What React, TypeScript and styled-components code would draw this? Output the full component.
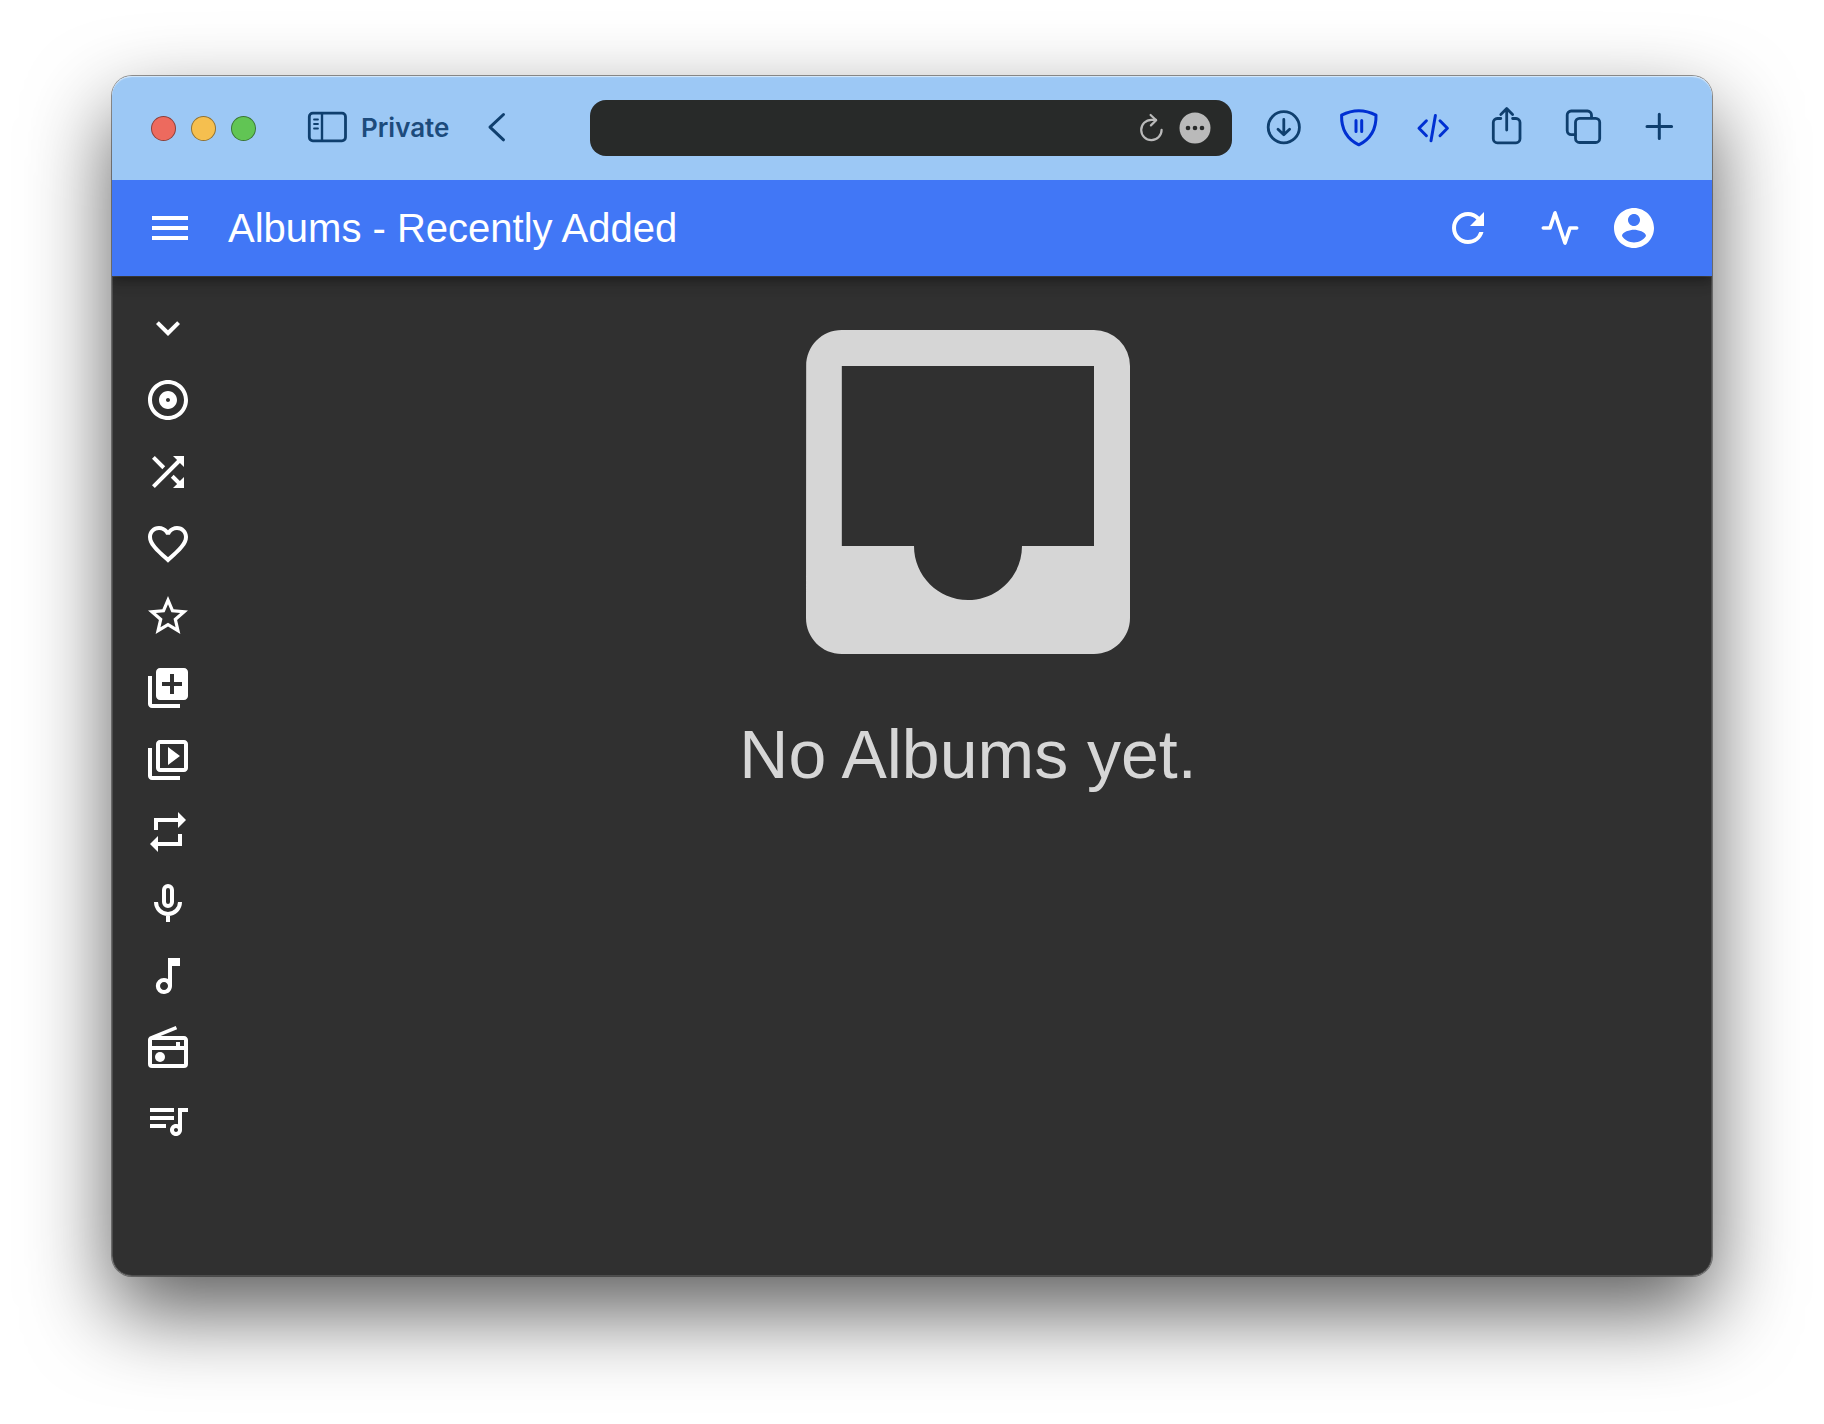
import React from 'react';
import styled, { createGlobalStyle } from 'styled-components';
import {
  MdExpandMore,
  MdFavoriteBorder,
  MdInbox,
  MdLibraryAdd,
  MdMenu,
  MdOutlineAlbum,
  MdOutlineMusicNote,
  MdOutlineRadio,
  MdOutlineVideoLibrary,
  MdRefresh,
  MdRepeat,
  MdShuffle,
  MdStarBorder,
} from 'react-icons/md';
import { FiActivity } from 'react-icons/fi';

const INK = '#0f3f6e';
const EXTENSION_BLUE = '#0030d2';

const GlobalStyle = createGlobalStyle`
  *, *::before, *::after { box-sizing: border-box; }
  body {
    margin: 0;
    background: #ffffff;
    font-family: Helvetica, "Liberation Sans", Arial, sans-serif;
  }
  button, input { font: inherit; }
`;

const Desktop = styled.div`
  display: flex;
  min-height: 100vh;
  padding: 76px 112px 148px;
`;

const Window = styled.div`
  flex: 1;
  min-width: 0;
  display: flex;
  flex-direction: column;
  border-radius: 20px;
  box-shadow:
    0 0 0 1px rgba(0, 0, 0, 0.4),
    0 36px 84px rgba(0, 0, 0, 0.64);
`;

const BrowserBar = styled.header`
  display: flex;
  align-items: center;
  height: 104px;
  padding: 0 33px 0 39px;
  background: #9cc8f5;
  border-radius: 20px 20px 0 0;
  box-shadow: inset 0 2px 1px -1px #d9eafb;
`;

const BareButton = styled.button`
  display: flex;
  align-items: center;
  justify-content: center;
  flex: none;
  padding: 0;
  border: 0;
  background: none;
  color: inherit;
  cursor: pointer;

  svg { display: block; overflow: visible; }
`;

const TrafficLights = styled.div`
  display: flex;
  gap: 15px;
`;

const Light = styled.button<{ $color: string }>`
  width: 25px;
  height: 25px;
  padding: 0;
  border: 1px solid rgba(0, 0, 0, 0.4);
  border-radius: 50%;
  background: ${(p) => p.$color};
`;

const SidebarButton = styled(BareButton)`
  gap: 14px;
  margin-left: 51px;
  color: ${INK};
`;

const PrivateLabel = styled.span`
  color: #1c4b7c;
  font-family: Inter, sans-serif;
  font-size: 26px;
  font-weight: 600;
  line-height: 32px;
`;

const BackButton = styled(BareButton)`
  width: 40px;
  height: 40px;
  margin-left: 28px;
  color: ${INK};
`;

const AddressBar = styled.div`
  display: flex;
  flex: 1;
  align-items: center;
  gap: 12px;
  min-width: 160px;
  height: 56px;
  margin: 0 32px 0 73px;
  padding: 0 21px;
  border-radius: 16px;
  background: #282a29;
  color: #bababa;
`;

const AddressInput = styled.input`
  flex: 1;
  min-width: 0;
  height: 40px;
  padding: 0;
  border: 0;
  outline: 0;
  background: transparent;
  color: inherit;
  font-size: 26px;
`;

const BrowserTools = styled.div`
  display: flex;
  gap: 35px;
`;

const ToolButton = styled(BareButton)<{ $color: string }>`
  width: 40px;
  height: 40px;
  color: ${(p) => p.$color};
`;

const AppBar = styled.div`
  position: relative;
  z-index: 1;
  display: flex;
  align-items: center;
  height: 96px;
  padding: 0 54px 0 34px;
  background: #4177f6;
  color: #ffffff;
  box-shadow:
    0 4px 8px -2px rgba(0, 0, 0, 0.2),
    0 8px 10px rgba(0, 0, 0, 0.14),
    0 2px 20px rgba(0, 0, 0, 0.12);
  clip-path: inset(0 0 -32px 0);
`;

const Title = styled.h1`
  flex: 1;
  margin: 0 34px;
  font-size: 40px;
  font-weight: 400;
  line-height: 64px;
`;

const BarButton = styled(BareButton)`
  width: 48px;
  height: 48px;
`;

const AppActions = styled.div`
  display: flex;
  gap: 26px;
`;

const RefreshButton = styled(BarButton)`
  margin-right: 44px;
`;

const Body = styled.div`
  display: flex;
  flex: 1;
  background: #303030;
  border-radius: 0 0 20px 20px;
  box-shadow: inset 0 0 0 1px rgba(255, 255, 255, 0.14);
`;

const Sidebar = styled.nav`
  flex: none;
  width: 112px;
  padding: 16px 0;
`;

const MenuList = styled.ul`
  margin: 0;
  padding: 0;
  list-style: none;
`;

const MenuButton = styled(BareButton)`
  width: 100%;
  height: 72px;
  color: #ffffff;
`;

const EmptyState = styled.main`
  display: flex;
  flex: 1;
  flex-direction: column;
  align-items: center;
  min-width: 0;
  color: #d6d6d6;

  svg { display: block; }
`;

const EmptyText = styled.p`
  margin: 0;
  font-size: 68px;
  line-height: 92px;
`;

type StrokeProps = {
  width?: number;
  size?: number;
  children: React.ReactNode;
};

function Stroke({ width = 3, size = 40, children }: StrokeProps) {
  return (
    <svg
      width={size}
      height={size}
      viewBox={`0 0 ${size} ${size}`}
      fill="none"
      stroke="currentColor"
      strokeWidth={width}
      strokeLinecap="round"
      strokeLinejoin="round"
      aria-hidden="true"
    >
      {children}
    </svg>
  );
}

function AccountIcon() {
  return (
    <svg width="48" height="48" viewBox="0 0 24 24" fill="currentColor" aria-hidden="true">
      <path d="M12 2C6.48 2 2 6.48 2 12s4.480 10 10 10 10-4.480 10-10S17.520 2 12 2zm0 3c1.660 0 3 1.340 3 3s-1.340 3-3 3-3-1.340-3-3 1.340-3 3-3zm0 14.200c-2.500 0-4.710-1.280-6-3.220.03-1.990 4-3.080 6-3.080 1.990 0 5.970 1.090 6 3.080-1.290 1.940-3.500 3.220-6 3.220z" />
    </svg>
  );
}

function MicIcon({ size }: { size: number }) {
  return (
    <svg width={size} height={size} viewBox="0 0 24 24" fill="none" stroke="currentColor" strokeWidth="2" aria-hidden="true">
      <rect x="10" y="3" width="4" height="10" rx="2" />
      <path d="M6 11a6 6 0 0 0 12 0M12 17v4" />
    </svg>
  );
}

function QueueIcon({ size }: { size: number }) {
  return (
    <svg width={size} height={size} viewBox="0 0 24 24" fill="currentColor" aria-hidden="true">
      <path d="M22 6h-5v8.180c-.31-.11-.65-.18-1-.18-1.660 0-3 1.340-3 3s1.340 3 3 3 3-1.340 3-3V8h3V6zm-7 0H3v2h12V6zm0 4H3v2h12v-2zm-4 4H3v2h8v-2zm4 3c0-.55.45-1 1-1s1 .45 1 1-.45 1-1 1-1-.45-1-1z" />
    </svg>
  );
}

const tools = [
  {
    label: 'Downloads',
    color: INK,
    icon: (
      <Stroke width={2.800}>
        <circle cx="19.8" cy="19.2" r="15.6" />
        <path d="M19.800 11.500V26.500M14 21.200l5.800 5.600 5.800-5.600" />
      </Stroke>
    ),
  },
  {
    label: 'Content blocker',
    color: EXTENSION_BLUE,
    icon: (
      <Stroke width={3}>
        <path d="M2.600 7.200Q19.800-1.600 37 7.200C37.400 21.500 31.500 31 19.800 36.800 8 31 2.200 21.500 2.600 7.200z" />
        <path d="M17 12.500V23.500M22.700 12.500V23.500" />
      </Stroke>
    ),
  },
  {
    label: 'Page source',
    color: EXTENSION_BLUE,
    icon: (
      <Stroke width={3}>
        <path d="M12.400 12.800L5 20.300l7.400 7.400M26 12.800l7.400 7.500-7.400 7.400M21.400 7.500L17 32.800" />
      </Stroke>
    ),
  },
  {
    label: 'Share',
    color: INK,
    icon: (
      <Stroke width={2.800}>
        <path d="M11.800 10.500H8.300a4 4 0 0 0-4 4V30.800a4 4 0 0 0 4 4H27a4 4 0 0 0 4-4V14.500a4 4 0 0 0-4-4H23.600" />
        <path d="M17.700 22V.8M11.800 6.400L17.700.6l5.900 5.800" />
      </Stroke>
    ),
  },
  {
    label: 'Tab overview',
    color: INK,
    icon: (
      <Stroke width={2.800}>
        <rect x="11.500" y="10.300" width="24.200" height="24.200" rx="4" />
        <path d="M27.500 9.800V7a4 4 0 0 0-4-4H7.200a4 4 0 0 0-4 4V22.600a4 4 0 0 0 4 4H11" />
      </Stroke>
    ),
  },
  {
    label: 'New tab',
    color: INK,
    icon: (
      <Stroke width={3}>
        <path d="M20.300 6.200V30.600M8 18.400H32.600" />
      </Stroke>
    ),
  },
];

const lights = [
  { label: 'Close', color: '#ed6a5e' },
  { label: 'Minimize', color: '#f5bf4f' },
  { label: 'Zoom', color: '#61c554' },
];

const menu = [
  { label: 'Albums', Icon: MdExpandMore },
  { label: 'All', Icon: MdOutlineAlbum },
  { label: 'Random', Icon: MdShuffle },
  { label: 'Favourites', Icon: MdFavoriteBorder },
  { label: 'Top Rated', Icon: MdStarBorder },
  { label: 'Recently Added', Icon: MdLibraryAdd },
  { label: 'Recently Played', Icon: MdOutlineVideoLibrary },
  { label: 'Most Played', Icon: MdRepeat },
  { label: 'Artists', Icon: MicIcon },
  { label: 'Songs', Icon: MdOutlineMusicNote },
  { label: 'Radios', Icon: MdOutlineRadio },
  { label: 'Playlists', Icon: QueueIcon },
];

export default function App() {
  return (
    <>
      <GlobalStyle />
      <Desktop>
        <Window>
          <BrowserBar>
            <TrafficLights>
              {lights.map((l) => (
                <Light key={l.label} $color={l.color} aria-label={l.label} />
              ))}
            </TrafficLights>
            <SidebarButton>
              <Stroke width={2.800}>
                <rect x="2.300" y="5.200" width="36.200" height="27.600" rx="3.500" />
                <path d="M15 5.200V32.800" strokeWidth="2.400" />
                <path d="M7 11.500H11M7 16H11M7 20.500H11" strokeWidth="1.800" />
              </Stroke>
              <PrivateLabel>Private</PrivateLabel>
            </SidebarButton>
            <BackButton aria-label="Back">
              <Stroke width={3}>
                <path d="M26.500 6.500L13 19.200 26.500 31.800" />
              </Stroke>
            </BackButton>
            <AddressBar>
              <AddressInput type="text" aria-label="Address" />
              <BareButton aria-label="Reload page">
                <Stroke width={2.200} size={32}>
                  <path d="M26.600 17.800A10.200 10.200 0 1 1 16.400 7.800H21" />
                  <path d="M15.600 3L21.200 8.200 15.900 13.400" />
                </Stroke>
              </BareButton>
              <BareButton aria-label="Page menu">
                <svg width="32" height="32" viewBox="0 0 32 32" aria-hidden="true">
                  <circle cx="16" cy="16" r="15.500" fill="currentColor" />
                  <g fill="#282a29">
                    <circle cx="9" cy="16" r="2.300" />
                    <circle cx="16" cy="16" r="2.300" />
                    <circle cx="23" cy="16" r="2.300" />
                  </g>
                </svg>
              </BareButton>
            </AddressBar>
            <BrowserTools>
              {tools.map((t) => (
                <ToolButton key={t.label} $color={t.color} aria-label={t.label}>
                  {t.icon}
                </ToolButton>
              ))}
            </BrowserTools>
          </BrowserBar>
          <AppBar>
            <BarButton aria-label="Open menu">
              <MdMenu size={48} />
            </BarButton>
            <Title>Albums - Recently Added</Title>
            <RefreshButton aria-label="Refresh">
              <MdRefresh size={48} />
            </RefreshButton>
            <AppActions>
              <BarButton aria-label="Activity">
                <FiActivity size={40} strokeWidth={2.2} />
              </BarButton>
              <BarButton aria-label="Account">
                <AccountIcon />
              </BarButton>
            </AppActions>
          </AppBar>
          <Body>
            <Sidebar aria-label="Library">
              <MenuList>
                {menu.map(({ label, Icon }) => (
                  <li key={label}>
                    <MenuButton aria-label={label}>
                      <Icon size={48} />
                    </MenuButton>
                  </li>
                ))}
              </MenuList>
            </Sidebar>
            <EmptyState>
              <MdInbox size={432} />
              <EmptyText>No Albums yet.</EmptyText>
            </EmptyState>
          </Body>
        </Window>
      </Desktop>
    </>
  );
}
